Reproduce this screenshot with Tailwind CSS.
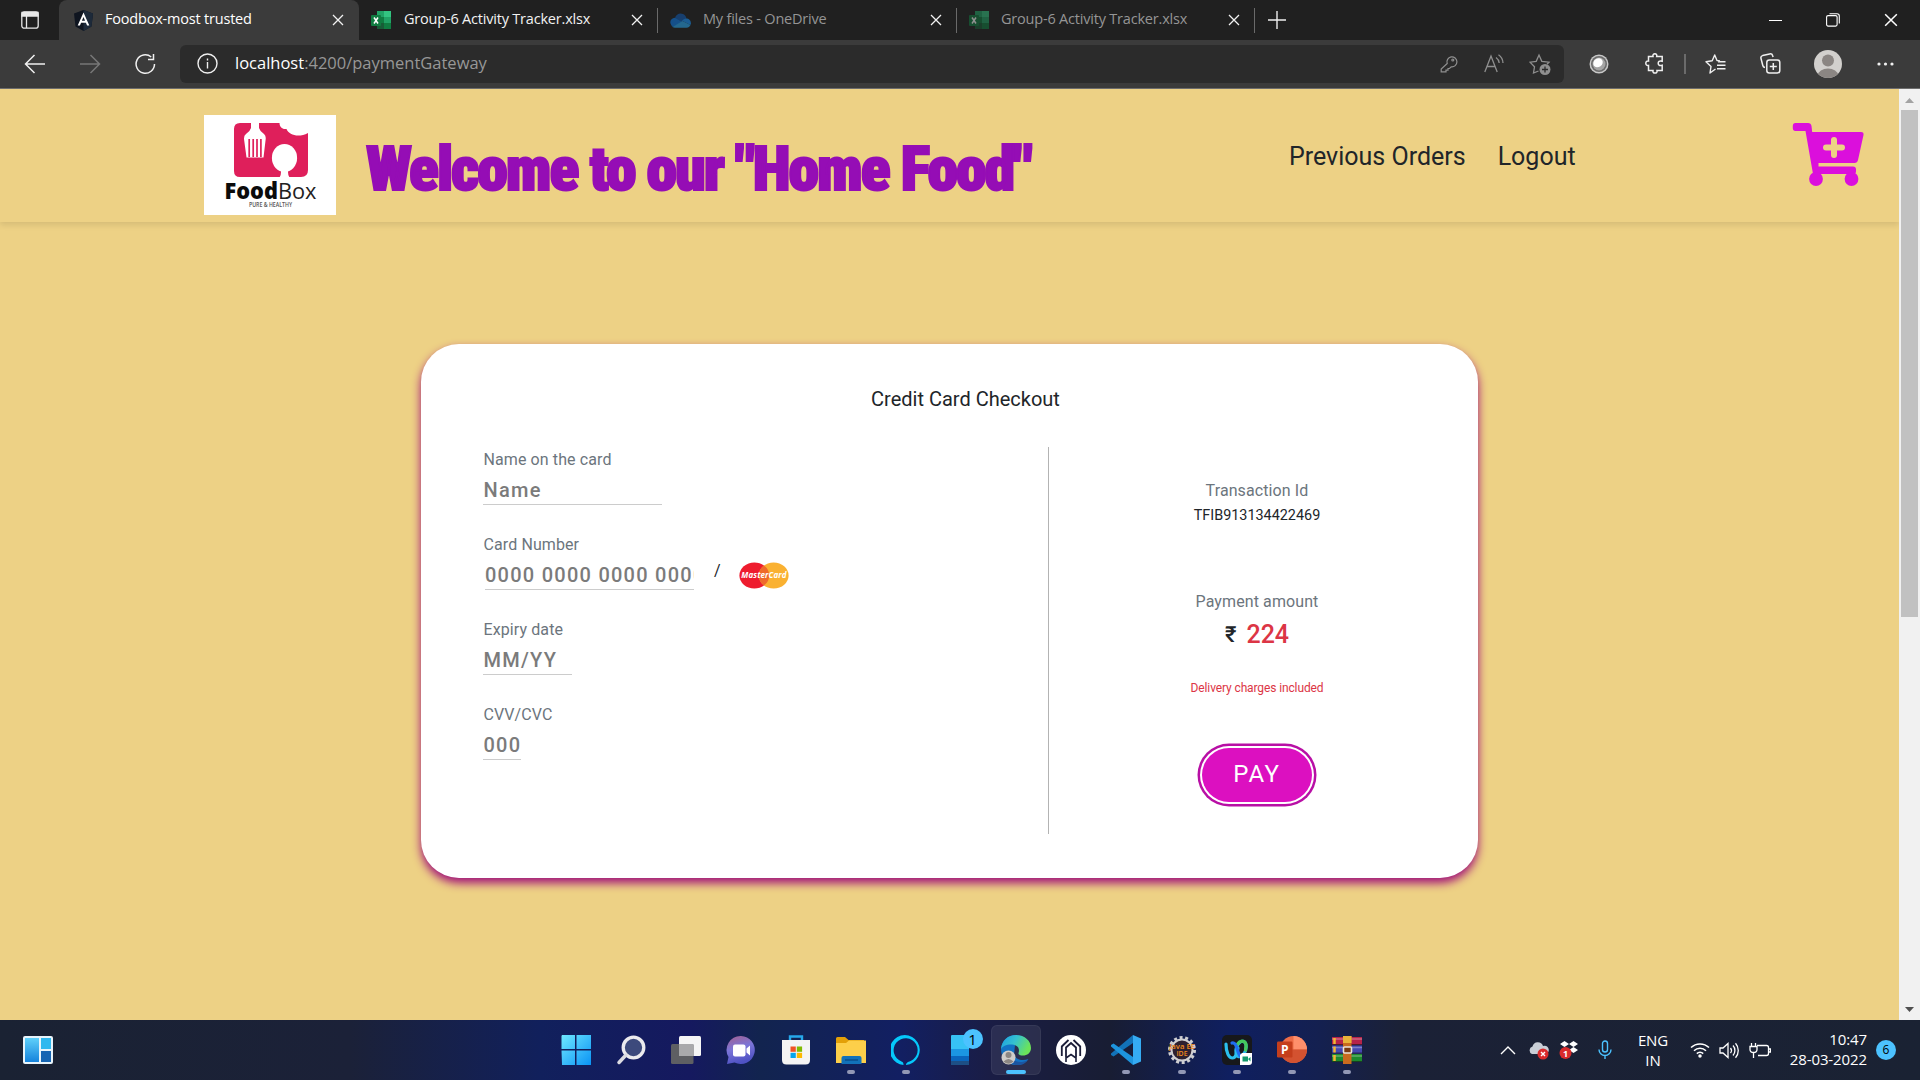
<!DOCTYPE html>
<html lang="en">
<head>
<meta charset="utf-8">
<title>Foodbox-most trusted</title>
<script src="https://cdn.jsdelivr.net/npm/@tailwindcss/browser@4"></script>
</head>
<body class="w-[1920px] h-[1080px] overflow-hidden flex flex-col bg-[#202020] font-['Open_Sans',sans-serif]">

<svg class="hidden">
  <symbol id="x" viewBox="0 0 12 12"><path d="M1 1l10 10M11 1L1 11" stroke="currentColor" stroke-width="1.3" fill="none"/></symbol>
  <symbol id="excel" viewBox="0 0 20 20"><path d="M6 1h14v18H6z" fill="#185c37"/><path d="M6 1h7v6H6z" fill="#21a366"/><path d="M13 1h7v6h-7z" fill="#33c481"/><path d="M6 7h7v6H6z" fill="#107c41"/><path d="M13 7h7v6h-7z" fill="#21a366"/><path d="M13 13h7v6h-7z" fill="#107c41"/><rect y="5" width="10" height="11" rx="1" fill="#107c41"/><path d="M3 7.5l4 6M7 7.5l-4 6" stroke="#fff" stroke-width="1.5"/></symbol>
</svg>

<!-- Tab strip -->
<header class="h-10 shrink-0 flex items-center text-[14.5px] leading-5 tracking-[-0.2px] text-[#f2f2f2]">
  <div class="w-[59px] h-10 flex items-center pl-[21px]">
    <svg class="w-[18px] h-[18px]" viewBox="0 0 18 18" fill="none" stroke="#e8e8e8" stroke-width="1.3"><rect x=".8" y=".8" width="16.4" height="16.4" rx="2.5"/><path d="M1 1.5h16v3.5H1z" fill="#e8e8e8"/><path d="M5.5 5v12"/></svg>
  </div>
  <div class="w-[300px] h-10 rounded-t-lg bg-[#3b3b3b] flex items-center pl-[14px] pr-[15px]">
    <svg class="w-[21px] h-[21px] mr-[11px]" viewBox="0 0 21 21"><path d="M10.5 0l9.5 3.5-1.5 13L10.5 21l-8-4.500L1 3.500z" fill="#0f1520"/><path d="M10.500 0L20 3.500l-1.500 13L10.500 21z" fill="#1d2a3a"/><path d="M10.500 2.600L4.700 15.600h2.200l1.200-2.900h4.800l1.200 2.900h2.200zm0 4.300l1.600 3.900H8.900z" fill="#fff"/></svg>
    <span class="flex-1 pb-[2px] whitespace-nowrap text-white">Foodbox-most trusted</span>
    <svg class="w-[12px] h-[12px]"><use href="#x"/></svg>
  </div>
  <div class="w-[299px] h-10 flex items-center pl-[12px] pr-[15px]">
    <svg class="w-[20px] h-[20px] mr-[13px]"><use href="#excel"/></svg>
    <span class="flex-1 pb-[2px] whitespace-nowrap">Group-6 Activity Tracker.xlsx</span>
    <svg class="w-[12px] h-[12px]"><use href="#x"/></svg>
  </div>
  <div class="w-px h-[25px] bg-[#6a6a6a] -ml-px"></div>
  <div class="w-[298px] h-10 flex items-center pl-[12px] pr-[14px]">
    <svg class="w-[21px] h-[15px] mr-[12px]" viewBox="0 0 21 15"><path d="M5 5C6 1 10-.5 13 1c2 .8 3 2.500 3.500 4.500L12 9z" fill="#173f6e"/><path d="M1.200 12C-1 9 1 5 5 4.800l8 4.500L3 14c-.8-.3-1.400-1-1.800-2z" fill="#15508a"/><path d="M16 5.400c3 0 5 2 4.900 5l-.5 1.600L12 7.800c1-1.500 2.500-2.400 4-2.400z" fill="#1b5d94"/><path d="M2.500 14L12.500 8l8 4c-.8 1.600-2 2.700-4 2.700H5c-1 0-1.800-.2-2.500-.7z" fill="#24688f"/></svg>
    <span class="flex-1 pb-[2px] whitespace-nowrap text-[#959595]">My files - OneDrive</span>
    <svg class="w-[12px] h-[12px]"><use href="#x"/></svg>
  </div>
  <div class="w-px h-[25px] bg-[#6a6a6a]"></div>
  <div class="w-[297px] h-10 flex items-center pl-[12px] pr-[14px]">
    <svg class="w-[20px] h-[20px] mr-[12px] opacity-50"><use href="#excel"/></svg>
    <span class="flex-1 pb-[2px] whitespace-nowrap text-[#959595]">Group-6 Activity Tracker.xlsx</span>
    <svg class="w-[12px] h-[12px]"><use href="#x"/></svg>
  </div>
  <div class="w-px h-[25px] bg-[#6a6a6a]"></div>
  <svg class="w-[18px] h-[18px] ml-[13px]" viewBox="0 0 18 18"><path d="M0 9h18M9 0v18" stroke="#eee" stroke-width="1.400"/></svg>
  <div class="ml-auto flex items-center gap-[44px] pr-[22px] text-white">
    <svg class="w-[13px] h-[13px]" viewBox="0 0 13 13"><path d="M0 6.500h13" stroke="currentColor"/></svg>
    <svg class="w-[14px] h-[14px]" viewBox="0 0 14 14" fill="none" stroke="currentColor" stroke-width="1.100"><rect x=".6" y="2.600" width="10.500" height="10.500" rx="1.500"/><path d="M3.500.8h7.500a2.300 2.300 0 012.300 2.300V10.500"/></svg>
    <svg class="w-[14px] h-[14px]"><use href="#x"/></svg>
  </div>
</header>

<!-- Address bar -->
<nav class="h-[49px] shrink-0 bg-[#3b3b3b] border-b border-[#6e6e6e] flex items-center pb-[1px] text-[#f0f0f0]">
  <div class="w-[180px] flex items-center pl-[24px]">
    <svg class="w-[21px] h-[20px]" viewBox="0 0 21 20" fill="none" stroke="currentColor" stroke-width="1.500"><path d="M21 10H1.500M10.500 1L1.500 10l9 9"/></svg>
    <svg class="w-[21px] h-[20px] ml-[35px] text-[#777]" viewBox="0 0 21 20" fill="none" stroke="currentColor" stroke-width="1.500"><path d="M0 10h19.500M10.500 1l9 9-9 9"/></svg>
    <svg class="w-[21px] h-[22px] ml-[34px]" viewBox="0 0 21 22" fill="none" stroke="currentColor" stroke-width="1.500"><path d="M19.500 11a9.200 9.200 0 11-3.300-7M18.500 1v5.500H13"/></svg>
  </div>
  <div class="w-[1384px] h-[38px] rounded-md bg-[#2b2b2b] flex items-center pl-[17px] pr-[13px]">
    <svg class="w-[21px] h-[21px]" viewBox="0 0 21 21" fill="none" stroke="currentColor" stroke-width="1.400"><circle cx="10.500" cy="10.500" r="9.500"/><path d="M10.500 9v6.500"/><path d="M10.500 5.500v2"/></svg>
    <span class="ml-[17px] flex-1 text-[16.5px] text-[#979797] whitespace-nowrap"><span class="text-white">localhost</span>:4200/paymentGateway</span>
    <svg class="w-[18px] h-[18px] text-[#8f8f8f]" viewBox="0 0 18 18" fill="none" stroke="currentColor" stroke-width="1.200"><path d="M7.200 8.500a5 5 0 114 3.300L9.500 13.500H8v1.700H6v1.700H1.200V14z"/><circle cx="12.800" cy="5" r="1"/></svg>
    <svg class="w-[20px] h-[19px] ml-[26px] text-[#8f8f8f]" viewBox="0 0 20 19" fill="none" stroke="currentColor" stroke-width="1.300"><path d="M.8 18L7 2l6.200 16M3 12.500h8M12 3.500c2 1.400 3 3.500 3.200 5.500M14.500.8c3 2 4.300 5 4.500 8.200"/></svg>
    <svg class="w-[22px] h-[22px] ml-[25px] text-[#8f8f8f]" viewBox="0 0 22 22" fill="none" stroke="currentColor" stroke-width="1.300"><path d="M9.500 18L4.500 20l1-6.200L1 9.200l6.200-.9L10 2l2.800 6.300 7.200.9-2 2"/><circle cx="16" cy="16.500" r="5.500" fill="currentColor" stroke="none"/><path d="M16 13.500v6M13 16.500h6" stroke="#2b2b2b"/></svg>
  </div>
  <div class="flex items-center pl-[25px]">
    <svg class="w-[20px] h-[20px]" viewBox="0 0 20 20"><circle cx="10" cy="10" r="9.500" fill="#c9c9c9"/><circle cx="10" cy="10" r="8" fill="#6b6b6b"/><circle cx="10" cy="10" r="6.500" fill="#a5a5a5"/><ellipse cx="9" cy="8.800" rx="5" ry="4.200" fill="#fff" transform="rotate(-35 9 8.800)"/></svg>
    <svg class="w-[20px] h-[21px] ml-[36px]" viewBox="0 0 20 21" fill="none" stroke="currentColor" stroke-width="1.500"><path d="M3.500 3.500H8c-.5-2 .6-2.700 1.900-2.700S12.200 1.500 11.700 3.500h5.500v4.700c-3-.9-4 .6-4 2s1 2.900 4 2v5.300H12c.4 1.800-.6 2.600-2 2.600s-2.400-.8-2-2.600H3.500v-5C1.700 12.800.8 11.700.8 10.300S1.700 7.700 3.500 8z"/></svg>
    <div class="w-[2px] h-[20px] bg-[#6b6b6b] ml-[19px]"></div>
    <svg class="w-[21px] h-[20px] ml-[19px]" viewBox="0 0 21 20" fill="none" stroke="currentColor" stroke-width="1.400"><path d="M10.500 15L5 19l1-6.500L1 7.700l6.200-.9L9.700 1l2.300 5.500 3 .4M13 7.800h7.500M12 11.300h8.500M12 14.800h8.500" stroke-linejoin="round"/></svg>
    <svg class="w-[21px] h-[21px] ml-[34px]" viewBox="0 0 21 21" fill="none" stroke="currentColor" stroke-width="1.500"><rect x="6.800" y="7" width="13" height="13" rx="2.500"/><path d="M13.300 10v7M9.800 13.500h7M5 14.500c-1.500-.3-2-1-2.200-2L1 5.500C.6 4 1.200 3 2.600 2.600l7-1.700c1.500-.3 2.600.200 3 1.600l.5 1.500"/></svg>
    <svg class="w-[28px] h-[28px] ml-[33px]" viewBox="0 0 28 28"><defs><clipPath id="av"><circle cx="14" cy="14" r="14"/></clipPath></defs><g clip-path="url(#av)"><path d="M0 0h28v28H0z" fill="#d2d0cd"/><circle cx="14" cy="10.500" r="6" fill="#8b8683"/><ellipse cx="14" cy="25" rx="10" ry="6.500" fill="#8b8683"/></g></svg>
    <svg class="w-[17px] h-[4px] ml-[35px]" viewBox="0 0 17 4" fill="currentColor"><circle cx="2" cy="2" r="1.600"/><circle cx="8.500" cy="2" r="1.600"/><circle cx="15" cy="2" r="1.600"/></svg>
  </div>
</nav>

<!-- Page viewport -->
<div class="h-[931px] shrink-0 flex bg-[#edd185]">
  <div class="w-[1899px] flex flex-col font-['Roboto',sans-serif] text-[#212529]">
    <div class="h-[133px] flex shadow-[0_3px_6px_rgba(0,0,0,0.1)]">
      <svg class="w-[132px] h-[100px] ml-[204px] mt-[26px]" viewBox="0 0 132 100">
        <path d="M0 0h132v100H0z" fill="#fff"/>
        <path d="M36 8h39.500c0 4 3 6.500 7 6 2.500 6 12 9 21.500 4v37q0 7-7 7H36q-6 0-6-6V14q0-6 6-6z" fill="#df1f5b"/>
        <path d="M47 8h8v5q1 3.500 5 6 2 1.500 1.700 5L59.500 42.500h-17L40 24q-.2-3.500 2-5 4-2.500 5-6z" fill="#fff"/>
        <path d="M45.200 24v18M49.200 24v18M53 24v18M56.900 24v18" stroke="#df1f5b" stroke-width="1.700"/>
        <ellipse cx="80.500" cy="43" rx="12.600" ry="14" fill="#fff"/><path d="M77 54h7v3q0 4 1.500 5.500H75.500Q77 61 77 57z" fill="#fff"/>
        <text x="20.500" y="83.500" font-family="Open Sans" font-size="22.500" font-weight="800" textLength="92" lengthAdjust="spacingAndGlyphs" fill="#0b0b0b">Food<tspan font-weight="400" fill="#222">Box</tspan></text>
        <text x="45" y="91.500" font-family="Open Sans" font-size="7" font-weight="600" textLength="43" lengthAdjust="spacingAndGlyphs" fill="#555">PURE &amp; HEALTHY</text>
      </svg>
      <h1 class="ml-[30px] mt-[44px] w-[923px] whitespace-nowrap text-[62px] leading-[72px] font-black font-stretch-[75%] tracking-[-2.1px] text-[#950db5] [-webkit-text-stroke:2px_#950db5]">Welcome to our "Home Food"</h1>
      <a class="mt-[52px] text-[25px] leading-[32px] whitespace-nowrap">Previous Orders</a>
      <a class="ml-[32px] mt-[52px] text-[25px] leading-[32px]">Logout</a>
      <svg class="w-[72px] h-[64px] ml-auto mr-[35px] mt-[33px]" viewBox="0 0 72 64" fill="#db0fdc"><path d="M3.500 1h12.500q3 0 3.500 3l.7 6H69q3 0 2.500 3l-5.500 25q-.6 3-3.500 3H26.500v3.500H61q3 0 3 3v1.500q0 3-2 3H21L13.500 9H3.500Q.800 9 .800 6V4q0-3 2.700-3z"/><path d="M42 15q3 0 3 3v4.500h5q3 0 3 3t-3 3h-5V33q0 3-3 3t-3-3v-4.500h-5q-3 0-3-3t3-3h5V18q0-3 3-3z" fill="#edd185"/><circle cx="24" cy="57" r="6.900"/><circle cx="59.500" cy="57" r="6.900"/></svg>
    </div>

    <main class="ml-[421px] mt-[122px] w-[1057px] h-[534px] rounded-[38px] bg-white pt-[43px] shadow-[0_5px_10px_0px_#a00f78]">
      <h2 class="pl-[32px] text-center text-[20px] leading-6">Credit Card Checkout</h2>
      <div class="mt-[36px] flex h-[387px]">
        <form class="w-[628px] pl-[62px] border-r border-[#b3b3b3] flex flex-col gap-[27px] text-[#6c757d] tracking-[0.1px]">
          <div class="flex flex-col">
            <label class="h-6 leading-[26px] pl-[0.5px]">Name on the card</label>
            <input placeholder="Name" class="w-[179px] h-[34px] pt-[4px] pl-[0.5px] border-b border-[#ccc] text-[20px] font-medium tracking-[1.25px] placeholder:text-[#7b7b7b]">
          </div>
          <div class="flex flex-col">
            <label class="h-6 leading-[26px] pl-[0.5px]">Card Number</label>
            <div class="flex pl-[2px]">
              <input placeholder="0000 0000 0000 0000" class="w-[209px] h-[34px] pt-[4px] border-b border-[#ccc] text-[20px] font-medium tracking-[1.25px] placeholder:text-[#7b7b7b]">
              <span class="ml-[20px] mt-[3px] w-[25px] leading-6 text-[#212529]">/</span>
              <svg class="w-[50px] h-[27px] mt-[6px]" viewBox="0 0 51 28"><ellipse cx="15.500" cy="14" rx="15.500" ry="13.500" fill="#ee1c2e"/><ellipse cx="35.500" cy="14" rx="15.500" ry="13.500" fill="#fab131"/><path d="M25.500 3.700a15.500 13.500 0 010 20.600 15.500 13.500 0 010-20.600z" fill="#ef6a2a"/><text x="2" y="17" font-family="Open Sans" font-size="8.500" font-weight="700" font-style="italic" textLength="47" lengthAdjust="spacingAndGlyphs" fill="#fff">MasterCard</text></svg>
            </div>
          </div>
          <div class="flex flex-col">
            <label class="h-6 leading-[26px] pl-[0.5px]">Expiry date</label>
            <input placeholder="MM/YY" class="w-[89px] h-[34px] pt-[4px] pl-[0.5px] border-b border-[#ccc] text-[20px] font-medium tracking-[1.25px] placeholder:text-[#7b7b7b]">
          </div>
          <div class="flex flex-col">
            <label class="h-6 leading-[26px] pl-[0.5px]">CVV/CVC</label>
            <input placeholder="000" class="w-[38px] h-[34px] pt-[4px] pl-[0.5px] border-b border-[#ccc] text-[20px] font-medium tracking-[1.25px] placeholder:text-[#7b7b7b]">
          </div>
        </form>
        <section class="w-[416px] pt-[32px] flex flex-col items-center">
          <span class="leading-6 tracking-[0.1px] text-[#6c757d]">Transaction Id</span>
          <span class="mt-px text-[14.4px] leading-6">TFIB913134422469</span>
          <span class="mt-[62px] leading-6 tracking-[0.1px] text-[#6c757d]">Payment amount</span>
          <div class="mt-[6px] flex gap-[10px] text-[25px] leading-[30px] font-medium"><span class="text-[22px]">₹</span><span class="text-[#dc3545]">224</span></div>
          <span class="mt-[29px] text-[12px] leading-[18px] tracking-[-0.12px] text-[#dc3545]">Delivery charges included</span>
          <button class="mt-[51px] w-[110px] h-[54px] rounded-full bg-[#dc10c0] text-white text-[24px] leading-none tracking-[1.6px] shadow-[0_0_0_2px_#fff,0_0_0_4.5px_#b80fa5] pb-[2px]">PAY</button>
        </section>
      </div>
    </main>
  </div>
  <div class="w-[21px] bg-[#f1f1f1] flex flex-col items-center">
    <svg class="w-[9px] h-[5px] mt-[9px]" viewBox="0 0 9 5"><path d="M4.500 0L9 5H0z" fill="#a3a3a3"/></svg>
    <div class="mt-[7px] w-[17px] h-[507px] bg-[#c1c1c1]"></div>
    <svg class="w-[9px] h-[5px] mt-auto mb-[8px]" viewBox="0 0 9 5"><path d="M4.500 5L0 0h9z" fill="#505050"/></svg>
  </div>
</div>

<!-- Taskbar -->
<footer class="h-[60px] shrink-0 flex items-center text-white bg-[linear-gradient(90deg,#1a2233_0px,#1b2138_350px,#11205c_540px,#15195f_690px,#12244f_760px,#121f62_900px,#1a1d45_990px,#181d33_1110px,#0f1f60_1230px,#142050_1320px,#1b2136_1400px,#1a2233_1920px)]">
  <div class="w-[548px] pl-[23px]">
    <svg class="w-[30px] h-[28px]" viewBox="0 0 30 28"><defs><linearGradient id="wg" x1="0" y1="0" x2="0" y2="1"><stop stop-color="#5fd0fa"/><stop offset="1" stop-color="#1583dc"/></linearGradient></defs><rect width="30" height="28" rx="2" fill="#e8f4fb"/><rect x="2" y="2" width="14" height="24" fill="url(#wg)"/><rect x="18" y="2" width="10" height="11" fill="#2fb8ef"/><rect x="18" y="15" width="10" height="11" fill="#1565b3"/></svg>
  </div>
  <div class="flex h-[60px] gap-[0.1px]">
    <div class="w-[55px] flex items-center justify-center"><svg class="w-[30px] h-[30px]" viewBox="0 0 30 30"><defs><linearGradient id="w" x1="0" y1="0" x2="1" y2="1"><stop stop-color="#6fe8ff"/><stop offset="1" stop-color="#0a93f5"/></linearGradient></defs><path d="M1 0h13v14H.500V1zM15.500 0H30v14H15.500zM.500 15.500H14V30H1zM15.500 15.500H30V30H15.500z" fill="url(#w)"/></svg></div>
    <div class="w-[55px] flex items-center justify-center"><svg class="w-[30px] h-[30px]" viewBox="0 0 30 30"><circle cx="17.500" cy="12.500" r="10.300" fill="#3d4a7c" stroke="#ecebee" stroke-width="3.300"/><path d="M10 20l-7 7.500" stroke="#dcdce2" stroke-width="3.500" stroke-linecap="round"/></svg></div>
    <div class="w-[55px] flex items-center justify-center"><svg class="w-[30px] h-[30px]" viewBox="0 0 30 30"><rect x="8" y="1" width="22" height="20" rx="1.500" fill="#f5f5f5"/><rect x="0" y="9" width="22.500" height="20" rx="1.500" fill="#5e5f63"/><path d="M8 9h14.500v12H8z" fill="#a9a9ab"/></svg></div>
    <div class="w-[55px] flex items-center justify-center"><svg class="w-[30px] h-[30px]" viewBox="0 0 30 30"><defs><linearGradient id="tm" x1="0" y1="0" x2=".3" y2="1"><stop stop-color="#a4608e"/><stop offset=".5" stop-color="#7b75d8"/><stop offset="1" stop-color="#4f52c4"/></linearGradient></defs><path d="M15 1a14 14 0 11-6.500 26.500L1 29l1.500-7A14 14 0 0115 1z" fill="url(#tm)"/><rect x="7" y="9.500" width="12.500" height="12" rx="2" fill="#fff"/><path d="M20.500 13.500l3.500-3v10l-3.500-3z" fill="#fff"/></svg></div>
    <div class="w-[55px] flex items-center justify-center"><svg class="w-[30px] h-[30px]" viewBox="0 0 30 30"><path d="M9 6V1.500h12V6" stroke="#26a8ea" stroke-width="2.400" fill="none"/><path d="M1 5h28v20q0 4.500-4.500 4.500h-19Q1 29.500 1 25z" fill="#f4f4f4"/><path d="M9.500 11.500h5.300v5.300H9.500z" fill="#f05325"/><path d="M15.800 11.500h5.300v5.300h-5.300z" fill="#80bb03"/><path d="M9.500 17.800h5.300v5.200H9.500z" fill="#06a5ee"/><path d="M15.800 17.800h5.300v5.200h-5.300z" fill="#fdb900"/></svg></div>
    <div class="w-[55px] flex flex-col items-center pt-[15px]"><svg class="w-[30px] h-[30px]" viewBox="0 0 30 30"><path d="M0 3.500Q0 2 1.500 2H9l3.500 3H28v8H0z" fill="#e3a008"/><path d="M0 8h10l3-2.500h17V28H0z" fill="#fdcf4a"/><path d="M5.500 29v-6q0-2 2-2h16q2 0 2 2v6z" fill="#1272ba"/><path d="M9 25h13" stroke="#0a4f8c" stroke-width="1.500"/></svg><i class="w-2 h-1 mt-[5px] rounded-full bg-[#9298b5]"></i></div>
    <div class="w-[55px] flex flex-col items-center pt-[15px]"><svg class="w-[30px] h-[30px]" viewBox="0 0 30 30"><path d="M12.500 30A15 15 0 1115 30c0-1.200.4-2 2-3a12 12 0 10-6.500-.5c1.600.7 2 1.700 2 3.500z" fill="#05c8fb"/></svg><i class="w-2 h-1 mt-[5px] rounded-full bg-[#9298b5]"></i></div>
    <div class="w-[55px] relative flex flex-col items-center pt-[15px]"><svg class="w-[30px] h-[30px]" viewBox="0 0 30 30"><path d="M5 1q0-1 1-1h16q1 0 1 1v28q0 1-1 1H6q-1 0-1-1z" fill="#37c2f5"/><path d="M5 14h18v8H5z" fill="#1b96e2"/><path d="M5 21h18v5H5z" fill="#0a66bd"/><path d="M5 26h18v4H5z" fill="#1d4f85"/></svg><span class="absolute left-[29px] top-[9px] w-[20px] h-[20px] rounded-full bg-[#4cc2ff] text-black text-[15px] leading-[20px] text-center">1</span></div>
    <div class="w-[55px] flex flex-col items-center"><div class="w-[50px] h-[50px] mt-[5px] rounded-md bg-white/8 border border-white/5 flex flex-col items-center pt-[9px]"><svg class="w-[30px] h-[30px] shrink-0" viewBox="0 0 30 30"><defs><linearGradient id="e1" x1="0" y1="0" x2="1" y2=".4"><stop stop-color="#1b9de2"/><stop offset=".5" stop-color="#35c1d0"/><stop offset="1" stop-color="#6be35a"/></linearGradient></defs><path d="M15 0C6 0 .5 7 0 14c0 9 6 15 14 16 6 .5 11-2 13.500-6-5 2-12 1.500-14.500-4z" fill="#1272c4"/><path d="M0 14C1 5 7 0 15 0c9 0 15 6 15 13 0 5-4 7.500-8 7.500-3 0-5-1-4.500-2.500C19 14 17 10 11 9.500 5 9.300 1.500 11.500 0 14z" fill="url(#e1)"/><path d="M9 17c0 8 8 13 18 8-4 5.500-9 5.500-13 5C8 27 7 21 9 17z" fill="#1b55a0"/><circle cx="7.500" cy="22.500" r="7" fill="#cfcdca"/><circle cx="7.500" cy="20" r="3" fill="#8b8683"/><path d="M2.500 26.500q5-5 10 0-5 4.500-10 0z" fill="#8b8683"/></svg><i class="w-[20px] h-1 shrink-0 mt-[5px] rounded-full bg-[#4cc2ff]"></i></div></div>
    <div class="w-[55px] flex flex-col items-center pt-[15px]"><svg class="w-[30px] h-[30px]" viewBox="0 0 30 30" fill="none"><circle cx="15" cy="15" r="15" fill="#fff"/><path d="M10 22.500V12.500L15 8l5 4.500v10" stroke="#1b1d38" stroke-width="1.800"/><path d="M5.800 21V11.500L12.500 5M24.200 21V11.500L17.500 5" stroke="#1b1d38" stroke-width="1.800"/><path d="M10 27v-4l5-3.500 5 3.500v4" stroke="#1b1d38" stroke-width="1.600"/></svg></div>
    <div class="w-[55px] flex flex-col items-center pt-[15px]"><svg class="w-[30px] h-[30px]" viewBox="0 0 30 30"><path d="M22 8L2.500 21.500 0 20v-1.500L22 0z" fill="#1272b8"/><path d="M22 22L2.500 8.500 0 10v1.500L22 30z" fill="#1d94dd"/><path d="M22 0l8 3.500v23L22 30z" fill="#35abf3"/></svg><i class="w-2 h-1 mt-[5px] rounded-full bg-[#9298b5]"></i></div>
    <div class="w-[55px] flex flex-col items-center pt-[15px]"><svg class="w-[30px] h-[30px]" viewBox="0 0 30 30"><circle cx="15" cy="15" r="12.500" fill="none" stroke="#cfcfd2" stroke-width="3" stroke-dasharray="3 2.610"/><circle cx="15" cy="15" r="10.500" fill="#2c2030" stroke="#cfcfd2" stroke-width="2"/><text x="2" y="14" font-family="Open Sans" font-size="7" font-weight="600" textLength="26" lengthAdjust="spacingAndGlyphs" fill="#f08a1c">Java EE</text><text x="9.500" y="21" font-family="Open Sans" font-size="7" font-weight="600" textLength="11" lengthAdjust="spacingAndGlyphs" fill="#f08a1c">IDE</text></svg><i class="w-2 h-1 mt-[5px] rounded-full bg-[#9298b5]"></i></div>
    <div class="w-[55px] flex flex-col items-center pt-[15px]"><svg class="w-[30px] h-[30px]" viewBox="0 0 30 30" fill="none"><rect width="30" height="30" rx="5" fill="#17181b"/><ellipse cx="19" cy="14" rx="4.800" ry="8" stroke="#2bb8ee" stroke-width="3.200" transform="rotate(18 19 14)"/><path d="M15.500 9c2-3.500 6.500-4 8-1 1 2 .8 4 0 7" stroke="#46c85a" stroke-width="3.200" stroke-linecap="round"/><path d="M4 9c0 9 3 14 6.500 14S15 18 16 13" stroke="#2bc0ee" stroke-width="3.200" stroke-linecap="round"/><path d="M10 8c3-1 4.500 3 5.500 7s2.500 7 5 7" stroke="#1f6df0" stroke-width="3.200" stroke-linecap="round"/><path d="M20 18h10v9q0 3-3 3h-9v-10z" fill="#fff"/><rect x="20.500" y="21.500" width="5.500" height="5" fill="#12976b"/><path d="M26 24l2.500-2v4.500z" fill="#12976b"/></svg><i class="w-2 h-1 mt-[5px] rounded-full bg-[#9298b5]"></i></div>
    <div class="w-[55px] flex flex-col items-center pt-[15px]"><svg class="w-[30px] h-[30px]" viewBox="0 0 30 30"><circle cx="16.500" cy="14.500" r="13.500" fill="#ed6c47"/><path d="M16.500 1a13.500 13.500 0 0113.500 13.500H16.500z" fill="#ff8f6b"/><path d="M30 14.500a13.500 13.500 0 01-27 0z" fill="#d35230"/><rect x="0" y="6.500" width="15.500" height="16" rx="1.200" fill="#c43e1c"/><text x="4" y="19" font-family="Open Sans" font-size="12" font-weight="700" fill="#fff">P</text></svg><i class="w-2 h-1 mt-[5px] rounded-full bg-[#9298b5]"></i></div>
    <div class="w-[55px] flex flex-col items-center pt-[15px]"><svg class="w-[30px] h-[30px]" viewBox="0 0 30 30"><path d="M0 2h30v8H0z" fill="#b5234a"/><path d="M0 10.500h30v8H0z" fill="#4548b0"/><path d="M0 19h30v8H0z" fill="#1d8a2e"/><path d="M0 4h30M0 12.500h30M0 21h30" stroke="#fff" stroke-opacity=".3" stroke-width="1.500"/><path d="M0 9.500h30M0 18h30M0 26.500h30" stroke="#141414" stroke-opacity=".6"/><path d="M2.500 3v6M2.500 11.500v6M2.500 20v6" stroke="#f2b632" stroke-width="2.500"/><path d="M11 1h8.500v28H11z" fill="#c86a1e"/><path d="M11 1h8.500v7H11z" fill="#e8b33a"/><rect x="11.500" y="12" width="8" height="6" rx="1" fill="#7a3a12" stroke="#e9e4dc" stroke-width="1.600"/></svg><i class="w-2 h-1 mt-[5px] rounded-full bg-[#9298b5]"></i></div>
  </div>
  <div class="ml-auto pr-[24px] flex items-center text-[15px] leading-5 tracking-[-0.1px]">
    <svg class="w-[16px] h-[9px]" viewBox="0 0 16 9" fill="none" stroke="#fff" stroke-width="1.400"><path d="M1 8l7-7 7 7"/></svg>
    <svg class="w-[21px] h-[19px] ml-[12px]" viewBox="0 0 21 19"><path d="M4 13a4 4 0 01.500-7.500A5.500 5.500 0 0115 5a4 4 0 013 8z" fill="#c9ced6"/><circle cx="15" cy="13" r="5.500" fill="#d92b2b"/><path d="M13 11l4 4m0-4l-4 4" stroke="#fff" stroke-width="1.400"/></svg>
    <svg class="w-[20px] h-[20px] ml-[10px]" viewBox="0 0 20 20"><path d="M5.500 1L10 4 5.500 7 1 4zM14.500 1L19 4l-4.500 3L10 4zM14.500 7L19 10l-4.500 3L10 10z" fill="#fff"/><circle cx="6.500" cy="13" r="6" fill="#d92b2b"/><text x="4" y="16.500" font-family="Open Sans" font-size="9" font-weight="700" fill="#fff">1</text></svg>
    <svg class="w-[14px] h-[20px] ml-[19px]" viewBox="0 0 14 20" fill="none" stroke="#4cc2ff" stroke-width="1.400"><rect x="4.500" y="1" width="5" height="11" rx="2.500"/><path d="M1 9.500a6 6 0 0012 0M7 15.500V19"/></svg>
    <div class="w-[40px] ml-[21px] text-center">ENG<br>IN</div>
    <svg class="w-[20px] h-[16px] ml-[17px]" viewBox="0 0 20 16" fill="none" stroke="#fff" stroke-width="1.500"><path d="M1 5.500a13 13 0 0118 0M4 8.700a8.500 8.500 0 0112 0M6.800 11.600a4.500 4.500 0 016.400 0"/><circle cx="10" cy="14" r="1" fill="#fff"/></svg>
    <svg class="w-[20px] h-[17px] ml-[9px]" viewBox="0 0 20 17" fill="none" stroke="#fff" stroke-width="1.300"><path d="M1 6v5h3l5 4.500v-14L4 6zM11.500 6a4 4 0 010 5M14 3.500a7.500 7.500 0 010 10M16.500 1.200a11 11 0 010 14.600"/></svg>
    <svg class="w-[22px] h-[17px] ml-[10px]" viewBox="0 0 22 17" fill="none" stroke="#fff" stroke-width="1.300"><path d="M8 3.500h9.500q2 0 2 2v6q0 2-2 2H9M20 7h1.500v3H20M2.500 1v3M6.500 1v3M1 4.500h7v3q0 3-3.500 3T1 7.500zM4.500 10.500V16"/></svg>
    <div class="w-[80px] ml-[16px] pb-[2px] text-right">10:47<br>28-03-2022</div>
    <div class="w-[20px] h-[20px] ml-[9px] rounded-full bg-[#4cc2ff] text-black text-[12px] leading-[20px] text-center">6</div>
  </div>
</footer>
</body>
</html>
